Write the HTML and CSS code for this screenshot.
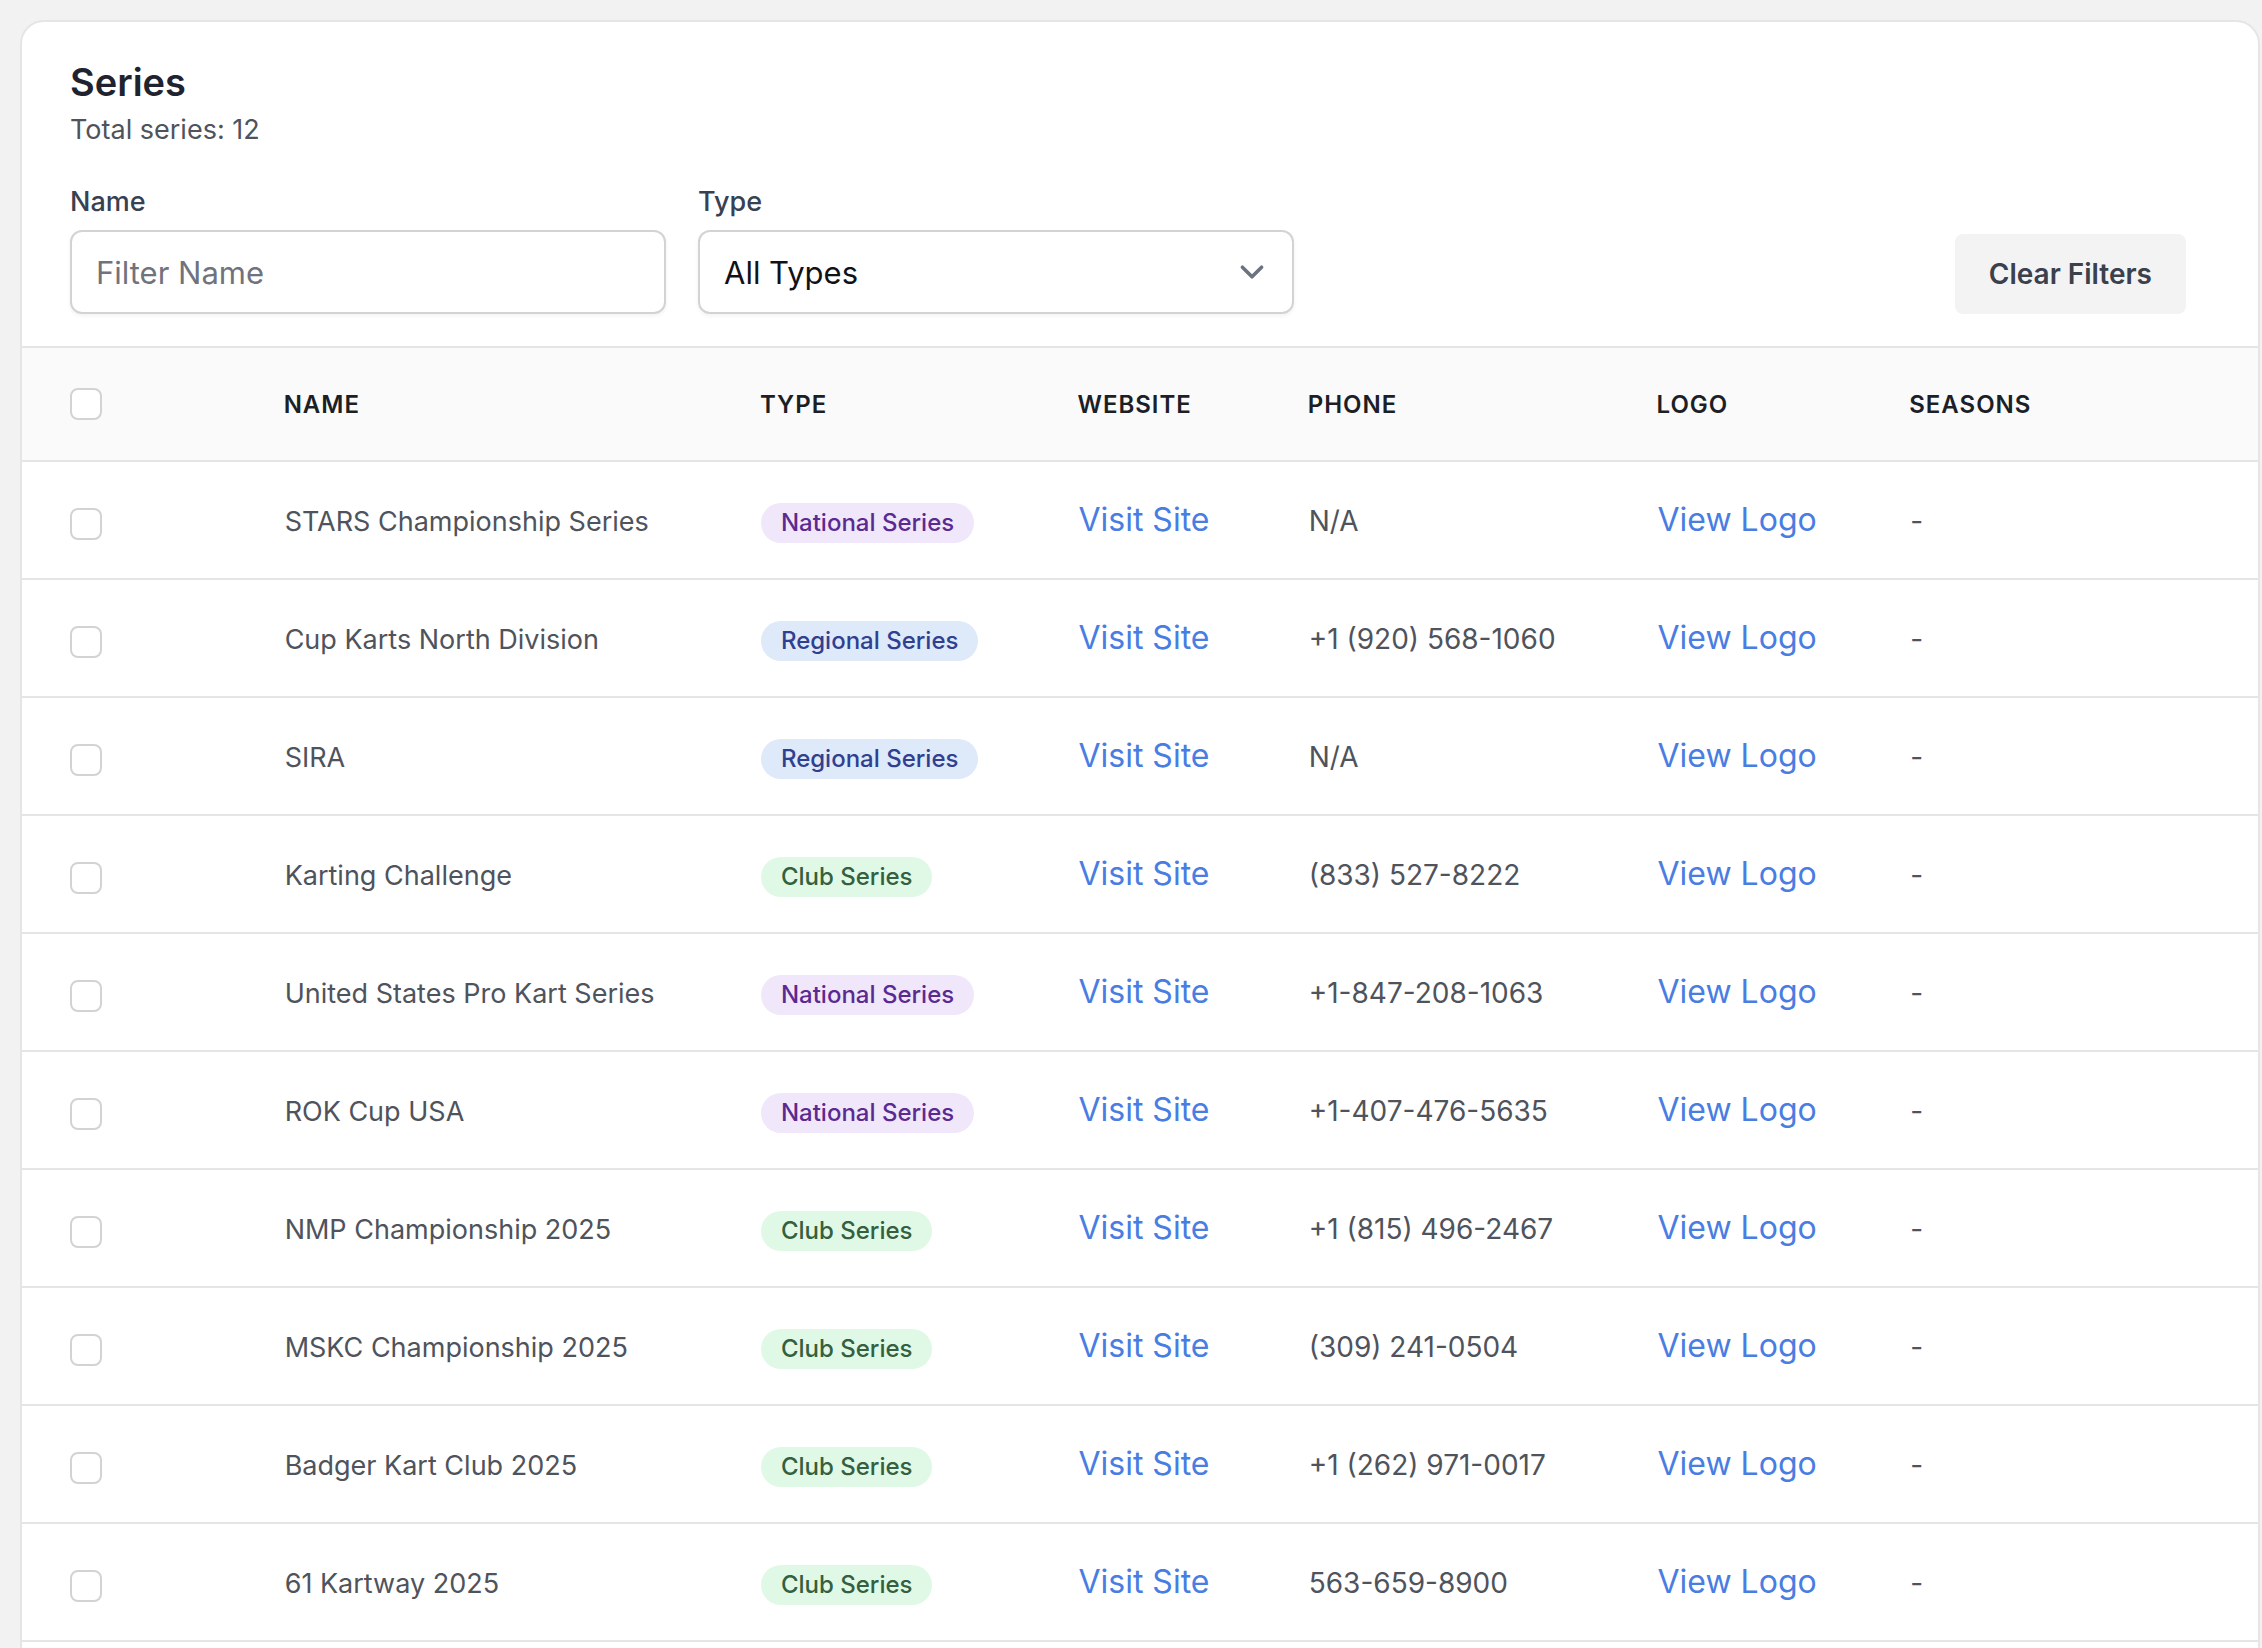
FILE: index.html
```
<!DOCTYPE html>
<html lang="en">
<head>
    <meta charset="UTF-8">
    <meta name="viewport" content="width=device-width, initial-scale=1.0">
    <title>Series</title>
    <link rel="stylesheet" href="styles.css">
</head>
<body>
    <main class="card">
        <header class="card-header">
            <h1 class="title">Series</h1>
            <p class="total">Total series: 12</p>
            <form class="filters">
                <div class="field">
                    <label for="filter-name">Name</label>
                    <input class="control" id="filter-name" type="text" placeholder="Filter Name">
                </div>
                <div class="field">
                    <label for="filter-type">Type</label>
                    <div class="select-wrap">
                        <select class="control" id="filter-type">
                            <option>All Types</option>
                        </select>
                        <svg class="chevron" viewBox="0 0 20 20" fill="none" stroke="#6b7280" stroke-width="1.5" stroke-linecap="round" stroke-linejoin="round"><path d="M6 8l4 4 4-4"/></svg>
                    </div>
                </div>
                <button class="clear-button" type="reset">Clear Filters</button>
            </form>
        </header>
        <table class="series-table">
            <colgroup>
                <col class="col-check">
                <col class="col-name">
                <col class="col-type">
                <col class="col-website">
                <col class="col-phone">
                <col class="col-logo">
                <col>
            </colgroup>
            <thead>
                <tr>
                    <th class="check"><input type="checkbox" aria-label="Select all"></th>
                    <th>Name</th>
                    <th>Type</th>
                    <th>Website</th>
                    <th>Phone</th>
                    <th>Logo</th>
                    <th>Seasons</th>
                </tr>
            </thead>
            <tbody>
                <tr>
                    <td class="check"><input type="checkbox" aria-label="Select row"></td>
                    <td class="name">STARS Championship Series</td>
                    <td><span class="badge national">National Series</span></td>
                    <td><a href="#">Visit Site</a></td>
                    <td>N/A</td>
                    <td><a href="#">View Logo</a></td>
                    <td>-</td>
                </tr>
                <tr>
                    <td class="check"><input type="checkbox" aria-label="Select row"></td>
                    <td class="name">Cup Karts North Division</td>
                    <td><span class="badge regional">Regional Series</span></td>
                    <td><a href="#">Visit Site</a></td>
                    <td>+1 (920) 568-1060</td>
                    <td><a href="#">View Logo</a></td>
                    <td>-</td>
                </tr>
                <tr>
                    <td class="check"><input type="checkbox" aria-label="Select row"></td>
                    <td class="name">SIRA</td>
                    <td><span class="badge regional">Regional Series</span></td>
                    <td><a href="#">Visit Site</a></td>
                    <td>N/A</td>
                    <td><a href="#">View Logo</a></td>
                    <td>-</td>
                </tr>
                <tr>
                    <td class="check"><input type="checkbox" aria-label="Select row"></td>
                    <td class="name">Karting Challenge</td>
                    <td><span class="badge club">Club Series</span></td>
                    <td><a href="#">Visit Site</a></td>
                    <td>(833) 527-8222</td>
                    <td><a href="#">View Logo</a></td>
                    <td>-</td>
                </tr>
                <tr>
                    <td class="check"><input type="checkbox" aria-label="Select row"></td>
                    <td class="name">United States Pro Kart Series</td>
                    <td><span class="badge national">National Series</span></td>
                    <td><a href="#">Visit Site</a></td>
                    <td>+1-847-208-1063</td>
                    <td><a href="#">View Logo</a></td>
                    <td>-</td>
                </tr>
                <tr>
                    <td class="check"><input type="checkbox" aria-label="Select row"></td>
                    <td class="name">ROK Cup USA</td>
                    <td><span class="badge national">National Series</span></td>
                    <td><a href="#">Visit Site</a></td>
                    <td>+1-407-476-5635</td>
                    <td><a href="#">View Logo</a></td>
                    <td>-</td>
                </tr>
                <tr>
                    <td class="check"><input type="checkbox" aria-label="Select row"></td>
                    <td class="name">NMP Championship 2025</td>
                    <td><span class="badge club">Club Series</span></td>
                    <td><a href="#">Visit Site</a></td>
                    <td>+1 (815) 496-2467</td>
                    <td><a href="#">View Logo</a></td>
                    <td>-</td>
                </tr>
                <tr>
                    <td class="check"><input type="checkbox" aria-label="Select row"></td>
                    <td class="name">MSKC Championship 2025</td>
                    <td><span class="badge club">Club Series</span></td>
                    <td><a href="#">Visit Site</a></td>
                    <td>(309) 241-0504</td>
                    <td><a href="#">View Logo</a></td>
                    <td>-</td>
                </tr>
                <tr>
                    <td class="check"><input type="checkbox" aria-label="Select row"></td>
                    <td class="name">Badger Kart Club 2025</td>
                    <td><span class="badge club">Club Series</span></td>
                    <td><a href="#">Visit Site</a></td>
                    <td>+1 (262) 971-0017</td>
                    <td><a href="#">View Logo</a></td>
                    <td>-</td>
                </tr>
                <tr>
                    <td class="check"><input type="checkbox" aria-label="Select row"></td>
                    <td class="name">61 Kartway 2025</td>
                    <td><span class="badge club">Club Series</span></td>
                    <td><a href="#">Visit Site</a></td>
                    <td>563-659-8900</td>
                    <td><a href="#">View Logo</a></td>
                    <td>-</td>
                </tr>
            </tbody>
        </table>
    </main>
</body>
</html>
```
FILE: styles.css
```
* {
    box-sizing: border-box;
}
body {
    margin: 0;
    padding: 20px 2px 0 20px;
    height: 100vh;
    overflow: hidden;
    background-color: #f2f2f2;
    color: #4f535c;
    font-family: Inter, "Liberation Sans", sans-serif;
    font-size: 28px;
    line-height: 40px;
}
.card {
    padding-bottom: 48px;
    background-color: white;
    border: 2px solid #e5e5e6;
    border-radius: 24px;
}
.card-header {
    padding: 32px 72px 32px 48px;
}
.title {
    margin: 0;
    color: #1f2330;
    font-size: 38px;
    font-weight: 600;
    line-height: 56px;
}
.total {
    margin: 0;
    font-size: 27px;
    line-height: 40px;
}
.filters {
    display: flex;
    align-items: flex-end;
    gap: 32px;
    margin-top: 32px;
}
.field {
    flex: 0 1 596px;
}
.field label {
    display: block;
    margin-bottom: 8px;
    color: #374151;
    font-size: 27px;
    font-weight: 500;
}
.control {
    display: block;
    width: 100%;
    height: 84px;
    padding: 0 24px;
    appearance: none;
    background-color: white;
    border: 2px solid #d3d3d6;
    border-radius: 12px;
    box-shadow: 0 2px 4px rgba(0, 0, 0, 0.05);
    color: #111118;
    font-family: inherit;
    font-size: 31px;
}
.control::placeholder {
    color: #70737d;
}
.select-wrap {
    position: relative;
}
.chevron {
    position: absolute;
    top: 18px;
    right: 18px;
    width: 48px;
    height: 48px;
    pointer-events: none;
}
.clear-button {
    margin-left: auto;
    padding: 20px 34px;
    background-color: #f3f3f4;
    border: none;
    border-radius: 8px;
    color: #3a404c;
    font-family: inherit;
    font-size: 28px;
    font-weight: 600;
    line-height: 40px;
    cursor: pointer;
}
.series-table {
    width: 100%;
    table-layout: fixed;
    border-collapse: separate;
    border-spacing: 0;
    border-top: 2px solid #e5e5e6;
}
.col-check {
    width: 9.6%;
}
.col-name {
    width: 21.3%;
}
.col-type {
    width: 14.2%;
}
.col-website {
    width: 10.3%;
}
.col-phone {
    width: 15.6%;
}
.col-logo {
    width: 11.3%;
}
th, td {
    border-bottom: 2px solid #e5e5e6;
    text-align: left;
    white-space: nowrap;
}
th {
    height: 114px;
    padding: 2px 0 0 47px;
    background-color: #fafafb;
    color: #1c1f26;
    font-size: 24px;
    font-weight: 600;
    letter-spacing: 1px;
    text-transform: uppercase;
}
td {
    height: 118px;
    padding: 38px 0 0 48px;
    vertical-align: baseline;
}
.name {
    font-size: 27px;
}
th.check {
    padding: 0 0 0 48px;
}
td.check {
    padding-top: 8px;
    vertical-align: middle;
}
.check input {
    display: block;
    width: 32px;
    height: 32px;
    margin: 0;
    appearance: none;
    background-color: white;
    border: 2px solid #d3d3d6;
    border-radius: 8px;
}
.series-table a {
    color: #4a7de2;
    font-size: 32px;
    text-decoration: none;
}
.badge {
    display: inline-block;
    padding: 4px 20px;
    border-radius: 20px;
    font-size: 24px;
    font-weight: 500;
    line-height: 32px;
}
.national {
    background-color: #f1e7fb;
    color: #5b2a91;
}
.regional {
    background-color: #dee9fa;
    color: #2f4090;
}
.club {
    background-color: #e0f9e6;
    color: #33603f;
}
```
